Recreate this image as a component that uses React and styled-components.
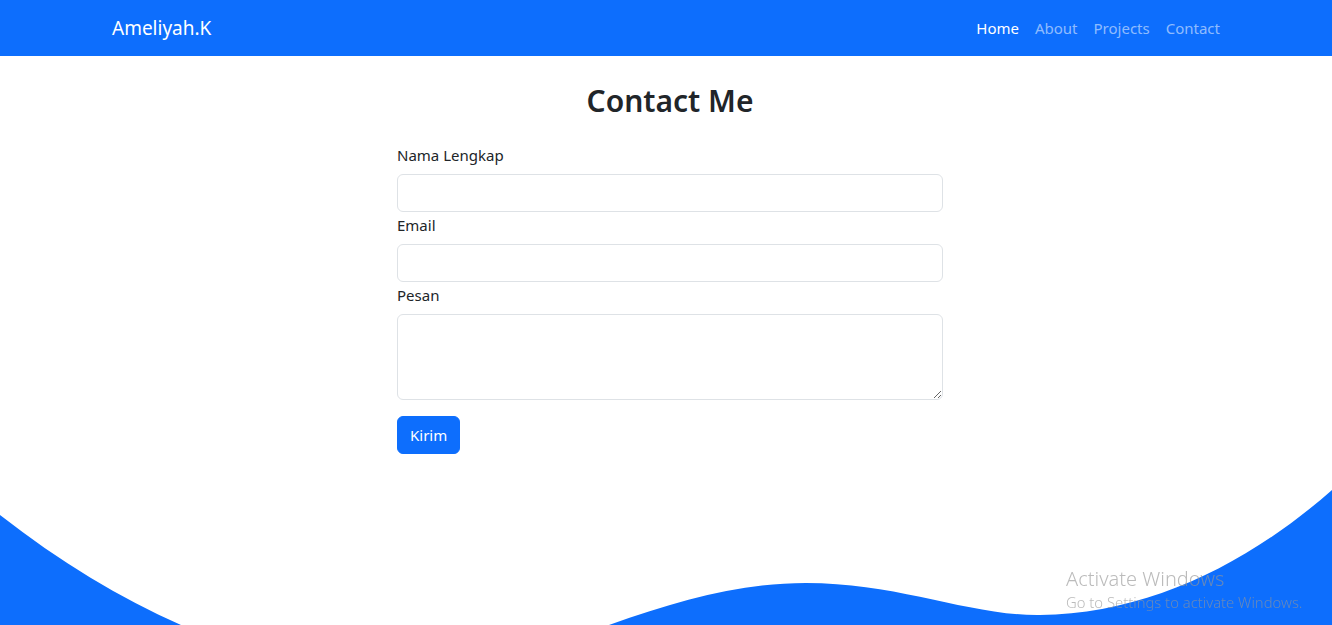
import React from "react";
import styled, { createGlobalStyle } from "styled-components";

const GlobalStyle = createGlobalStyle`
  * { box-sizing: border-box; }
  body {
    margin: 0;
    font-family: "Noto Sans", "Open Sans", Arial, sans-serif;
    font-size: 15px;
    line-height: 1.5;
    color: #212529;
    background: #fff;
  }
`;

const Page = styled.div`
  min-height: 100vh;
  display: flex;
  flex-direction: column;
  overflow: hidden;
`;

const Navbar = styled.nav`
  background: #0d6efd;
  height: 56px;
`;

const Container = styled.div`
  max-width: 1148px;
  margin: 0 auto;
  padding: 0 12px 0 20px;
  height: 100%;
  display: flex;
  align-items: center;
`;

const Brand = styled.a`
  color: #fff;
  font-size: 19px;
  line-height: 30px;
  text-decoration: none;
  margin-right: auto;
`;

const NavList = styled.ul`
  display: flex;
  list-style: none;
  margin: 0;
  padding: 0;
`;

const NavLink = styled.a`
  display: block;
  padding: 8px;
  font-size: 15px;
  line-height: 24px;
  text-decoration: none;
  color: ${(p) => (p.$active ? "#fff" : "rgba(255,255,255,0.55)")};
`;

const Main = styled.main`
  padding: 26px 0 0 8px;
`;

const Title = styled.h2`
  margin: 0 0 23px;
  font-size: 30px;
  font-weight: 600;
  line-height: 38px;
  text-align: center;
`;

const Form = styled.form`
  width: 546px;
  margin: 0 auto;
  display: flex;
  flex-direction: column;
`;

const Label = styled.label`
  display: block;
  margin-bottom: 7px;
  font-size: 15px;
  line-height: 24px;
`;

const Field = styled.input`
  display: block;
  width: 100%;
  height: 38px;
  padding: 6px 12px;
  font: inherit;
  color: #212529;
  border: 1px solid #dee2e6;
  border-radius: 6px;
  outline: none;
  margin-bottom: 1px;
`;

const Area = styled.textarea`
  display: block;
  width: 100%;
  height: 86px;
  padding: 6px 12px;
  font: inherit;
  color: #212529;
  border: 1px solid #dee2e6;
  border-radius: 6px;
  outline: none;
  resize: vertical;
`;

const Button = styled.button`
  align-self: flex-start;
  margin-top: 16px;
  height: 38px;
  padding: 6px 12px;
  font: inherit;
  font-size: 15px;
  color: #fff;
  background: #0d6efd;
  border: 1px solid #0d6efd;
  border-radius: 6px;
`;

const Wave = styled.svg`
  display: block;
  margin-top: auto;
  width: 100%;
  height: 135px;
`;

const Watermark = styled.div`
  position: fixed;
  left: 1066px;
  top: 566px;
  color: rgba(150, 150, 150, 0.65);
  font-family: "Noto Sans", sans-serif;
  font-weight: 300;
  pointer-events: none;
`;

const WatermarkTitle = styled.div`
  font-size: 20px;
  line-height: 26px;
`;

const WatermarkText = styled.div`
  font-size: 14.8px;
  line-height: 20px;
`;

export default function App() {
  return (
    <Page>
      <GlobalStyle />
      <Navbar>
        <Container>
          <Brand href="#">Ameliyah.K</Brand>
          <NavList>
            <li><NavLink $active href="#">Home</NavLink></li>
            <li><NavLink href="#">About</NavLink></li>
            <li><NavLink href="#">Projects</NavLink></li>
            <li><NavLink href="#">Contact</NavLink></li>
          </NavList>
        </Container>
      </Navbar>
      <Main>
        <Title>Contact Me</Title>
        <Form onSubmit={(e) => e.preventDefault()}>
          <Label htmlFor="nama">Nama Lengkap</Label>
          <Field id="nama" type="text" />
          <Label htmlFor="email">Email</Label>
          <Field id="email" type="email" />
          <Label htmlFor="pesan">Pesan</Label>
          <Area id="pesan" rows={3} />
          <Button type="submit">Kirim</Button>
        </Form>
      </Main>
      <Wave viewBox="0 0 1332 135" preserveAspectRatio="none">
        <path
          fill="#0d6efd"
          d="M0,25 C60,72 120,108 181,135 L0,135 Z M609,135 C680,110 740,93 806,93 C900,93 970,126 1040,125 C1150,124 1250,72 1332,0 L1332,135 Z"
        />
      </Wave>
      <Watermark>
        <WatermarkTitle>Activate Windows</WatermarkTitle>
        <WatermarkText>Go to Settings to activate Windows.</WatermarkText>
      </Watermark>
    </Page>
  );
}
